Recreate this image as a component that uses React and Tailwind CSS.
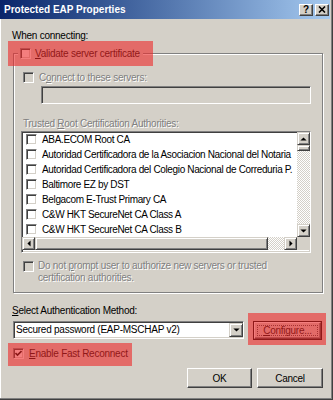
import React from 'react';

const sunken =
  'border border-t-[#808080] border-l-[#808080] border-b-white border-r-white shadow-[inset_1px_1px_0_#404040,inset_-1px_-1px_0_#d4d0c8]';
const raised =
  'border border-t-[#d4d0c8] border-l-[#d4d0c8] border-b-[#404040] border-r-[#404040] shadow-[inset_1px_1px_0_#fff,inset_-1px_-1px_0_#808080] bg-[#d4d0c8]';
const pushBtn =
  'border border-t-white border-l-white border-b-[#404040] border-r-[#404040] shadow-[inset_-1px_-1px_0_#808080] bg-[#d4d0c8]';
const disabledText = 'text-[#808080] [text-shadow:1px_1px_0_#fff]';
const highlight = 'absolute bg-[rgba(236,40,40,0.6)] pointer-events-none';

function CheckBox({ checked, disabled }) {
  return (
    <span
      className={`w-[11px] h-[11px] shrink-0 flex items-center justify-center ${sunken} ${
        disabled ? 'bg-[#d4d0c8]' : 'bg-white'
      }`}
    >
      {checked && (
        <svg width="7" height="7" viewBox="0 0 7 7">
          <path d="M0.5 3 L2.5 5 L6.5 1" stroke="#000" strokeWidth="1.6" fill="none" />
        </svg>
      )}
    </span>
  );
}

function Arrow({ dir }) {
  const pts = {
    up: '0,4 3.5,0.5 7,4',
    down: '0,0.5 3.5,4 7,0.5',
    left: '4,0 0.5,3.5 4,7',
    right: '0.5,0 4,3.5 0.5,7',
  }[dir];
  const vertical = dir === 'up' || dir === 'down';
  return (
    <svg width={vertical ? 7 : 4} height={vertical ? 4 : 7} viewBox={vertical ? '0 0 7 4.5' : '0 0 4.5 7'}>
      <polygon points={pts} fill="#000" />
    </svg>
  );
}

const certs = [
  'ABA.ECOM Root CA',
  'Autoridad Certificadora de la Asociacion Nacional del Notaria',
  'Autoridad Certificadora del Colegio Nacional de Correduria P.',
  'Baltimore EZ by DST',
  'Belgacom E-Trust Primary CA',
  'C&W HKT SecureNet CA Class A',
  'C&W HKT SecureNet CA Class B',
];

export default function App() {
  return (
    <div className="w-[333px] h-[400px] bg-[#d4d0c8] flex flex-col overflow-hidden text-[10px] tracking-[-0.25px] text-black [font-family:'Liberation_Sans',Arial,sans-serif] shadow-[inset_-1px_-1px_0_#404040,inset_-2px_-2px_0_#808080,inset_1px_0_0_#fff]">
      {/* title bar */}
      <div className="h-[19px] mr-[3px] flex items-center bg-gradient-to-r from-[#0a246a] to-[#a6caf0] pl-[4px] pr-[1px]">
        <span className="text-white font-bold tracking-normal leading-[19px] flex-1">Protected EAP Properties</span>
        <span className={`w-[14px] h-[12px] flex items-center justify-center text-[10px] font-bold leading-none ${pushBtn}`}>?</span>
        <span className={`w-[14px] h-[12px] ml-[2px] flex items-center justify-center ${pushBtn}`}>
          <svg width="8" height="7" viewBox="0 0 8 7">
            <path d="M1 0.5 L7 6.5 M7 0.5 L1 6.5" stroke="#000" strokeWidth="1.6" />
          </svg>
        </span>
      </div>

      <div className="mt-[10px] ml-[12px] h-[13px] leading-[13px]">When connecting:</div>

      {/* group box */}
      <div className="relative mt-[11px] ml-[13px] w-[310px] h-[240px] border border-[#808080] shadow-[inset_1px_1px_0_#fff,1px_1px_0_#fff]">
        <div className="absolute left-[4px] top-[-7px] h-[13px] flex items-center gap-[4px] bg-[#d4d0c8] px-[2px]">
          <CheckBox />
          <span className="leading-[13px] pr-[1px]">
            <u>V</u>alidate server certificate
          </span>
          <span className={`${highlight} left-[-10px] top-[-6px] w-[145px] h-[25px]`} />
        </div>

        <div className="mt-[17px] ml-[9px] h-[13px] flex items-center gap-[5px]">
          <CheckBox disabled />
          <span className={`leading-[13px] ${disabledText}`}>
            C<u>o</u>nnect to these servers:
          </span>
        </div>

        <div className={`mt-[2px] ml-[27px] w-[270px] h-[18px] bg-[#d4d0c8] ${sunken}`} />

        <div className={`mt-[13px] ml-[9px] h-[13px] leading-[13px] ${disabledText}`}>
          Trusted <u>R</u>oot Certification Authorities:
        </div>

        {/* list box */}
        <div className={`mt-[1px] ml-[7px] w-[290px] h-[122px] bg-white flex flex-col ${sunken}`}>
          <div className="flex h-[105px]">
            <div className="flex-1 overflow-hidden">
              {certs.map((c) => (
                <div key={c} className="h-[15px] pl-[4px] flex items-center gap-[5px] whitespace-nowrap tracking-[-0.35px]">
                  <CheckBox />
                  <span className="leading-[15px]">{c}</span>
                </div>
              ))}
            </div>
            <div className="w-[13px] flex flex-col">
              <div className={`h-[13px] flex items-center justify-center ${raised}`}>
                <Arrow dir="up" />
              </div>
              <div className={`h-[6px] ${raised}`} />
              <div className="flex-1 bg-[repeating-conic-gradient(#fff_0_25%,#d4d0c8_0_50%)] bg-[length:2px_2px]" />
              <div className={`h-[13px] flex items-center justify-center ${raised}`}>
                <Arrow dir="down" />
              </div>
            </div>
          </div>
          <div className="flex h-[13px]">
            <div className={`w-[13px] flex items-center justify-center ${raised}`}>
              <Arrow dir="left" />
            </div>
            <div className={`w-[233px] ${raised}`} />
            <div className="flex-1 bg-[repeating-conic-gradient(#fff_0_25%,#d4d0c8_0_50%)] bg-[length:2px_2px]" />
            <div className={`w-[13px] flex items-center justify-center ${raised}`}>
              <Arrow dir="right" />
            </div>
            <div className="w-[13px] bg-[#d4d0c8]" />
          </div>
        </div>

        <div className="mt-[7px] ml-[9px] flex items-start gap-[4px]">
          <span className="mt-[1px]">
            <CheckBox disabled />
          </span>
          <span className={`leading-[12px] ${disabledText}`}>
            Do not <u>p</u>rompt user to authorize new servers or trusted
            <br />
            certification authorities.
          </span>
        </div>
      </div>

      <div className="mt-[11px] ml-[12px] h-[13px] leading-[13px]">
        <u>S</u>elect Authentication Method:
      </div>

      <div className="mt-[4px] ml-[13px] flex items-start">
        <div className={`w-[231px] h-[18px] bg-white flex items-center ${sunken}`}>
          <span className="flex-1 pl-[2px] leading-[14px]">Secured password (EAP-MSCHAP v2)</span>
          <span className={`w-[14px] h-[14px] flex items-center justify-center ${raised}`}>
            <Arrow dir="down" />
          </span>
        </div>
        <div className="relative ml-[9px] w-[69px] h-[19px] border border-black">
          <div className={`w-full h-full flex items-center justify-center p-[2px] ${pushBtn}`}>
            <span className="w-full h-full flex items-center justify-center border border-dotted border-[#404040] leading-none">
              <u>C</u>onfigure...
            </span>
          </div>
          <span className={`${highlight} left-[-6px] top-[-9px] w-[78px] h-[32px]`} />
        </div>
      </div>

      <div className="relative mt-[7px] ml-[13px] w-fit h-[13px] flex items-center gap-[5px]">
        <CheckBox checked />
        <span className="leading-[13px]">
          <u>E</u>nable Fast Reconnect
        </span>
        <span className={`${highlight} left-[-5px] top-[-4px] w-[124px] h-[23px]`} />
      </div>

      <div className="mt-[8px] mr-[10px] flex justify-end gap-[5px]">
        <div className={`w-[65px] h-[20px] flex items-center justify-center ${pushBtn}`}>OK</div>
        <div className={`w-[66px] h-[20px] flex items-center justify-center ${pushBtn}`}>Cancel</div>
      </div>
    </div>
  );
}
